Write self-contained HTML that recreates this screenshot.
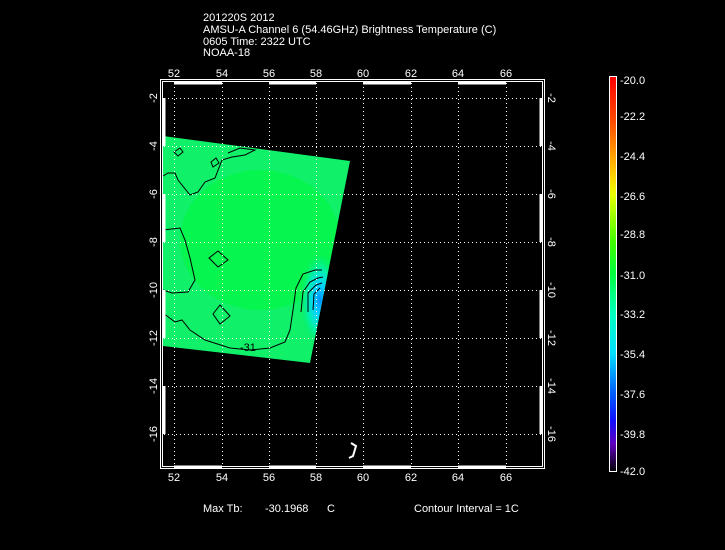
<!DOCTYPE html>
<html><head><meta charset="utf-8"><style>
html,body{margin:0;padding:0;background:#000;width:725px;height:550px;overflow:hidden}
svg{display:block}
text{font-family:"Liberation Sans",sans-serif;fill:#fff;font-size:11px}
</style></head><body>
<svg width="725" height="550" viewBox="0 0 725 550" xmlns="http://www.w3.org/2000/svg">
<defs>
<linearGradient id="cb" x1="0" y1="0" x2="0" y2="1">
<stop offset="0" stop-color="#ff0000"/>
<stop offset="0.12" stop-color="#ff5000"/>
<stop offset="0.25" stop-color="#ffd000"/>
<stop offset="0.3" stop-color="#e8ff00"/>
<stop offset="0.42" stop-color="#40ff00"/>
<stop offset="0.5" stop-color="#00ff40"/>
<stop offset="0.6" stop-color="#00ffc0"/>
<stop offset="0.7" stop-color="#00e0ff"/>
<stop offset="0.8" stop-color="#0060ff"/>
<stop offset="0.87" stop-color="#1010ff"/>
<stop offset="0.93" stop-color="#6000c0"/>
<stop offset="1" stop-color="#000000"/>
</linearGradient>
<radialGradient id="blue" cx="320" cy="300" r="36" gradientUnits="userSpaceOnUse" gradientTransform="translate(320 300) scale(0.55 1.3) translate(-320 -300)">
<stop offset="0" stop-color="#0090ff"/>
<stop offset="0.3" stop-color="#00d0ff"/>
<stop offset="0.65" stop-color="#00f0b0"/>
<stop offset="1" stop-color="#00f070" stop-opacity="0"/>
</radialGradient>
<clipPath id="sw"><polygon points="163,136 350,161 310,363 163,346"/></clipPath>
</defs>
<text x="203" y="21">201220S 2012</text>
<text x="203" y="33">AMSU-A Channel 6 (54.46GHz) Brightness Temperature (C)</text>
<text x="203" y="45">0605 Time: 2322 UTC</text>
<text x="203" y="56">NOAA-18</text>

<polygon points="163,136 350,161 310,363 163,346" fill="#10f068"/>
<g clip-path="url(#sw)">
<ellipse cx="260" cy="240" rx="80" ry="70" fill="#00f840" opacity="0.6"/>
<rect x="260" y="230" width="100" height="140" fill="url(#blue)"/>
</g>
<g fill="none" stroke="#000" stroke-width="1">
<path d="M163,176 L168,173 L175,173 L178,180 L190,195 L198,192 L205,182 L215,178 L222,160 L232,157 L245,155 L255,150 L240,148 L228,153"/>
<path d="M163,230 L180,228 L185,240 L190,258 L195,280 L188,292 L172,293 L163,290"/>
<path d="M163,313 L175,322 L182,320 L190,330 L205,340 L230,348 L250,350 L270,348 L285,342 L290,330 L293,310 L296,288 L303,274 L315,270 L322,270"/>
<path d="M301,312 L303,292 L310,282 L318,278 L323,277"/>
<path d="M308,312 L308,293 L316,285 L322,283"/>
<path d="M313,310 L314,294 L320,288"/>
<path d="M209,258 L218,251 L228,260 L218,267 Z"/>
<path d="M213,314 L220,305 L230,316 L220,324 Z"/>
<path d="M211,162 L216,158 L219,163 L213,167 Z"/>
<path d="M174,152 L180,148 L183,152 L178,156 Z"/>
</g>
<text x="240" y="351" font-size="10" style="fill:#000">-31</text>

<g stroke="#fff" stroke-width="1" stroke-dasharray="1,3">
<line x1="174.5" y1="83" x2="174.5" y2="466"/><line x1="222.5" y1="83" x2="222.5" y2="466"/>
<line x1="269.5" y1="83" x2="269.5" y2="466"/><line x1="316.5" y1="83" x2="316.5" y2="466"/>
<line x1="363.5" y1="83" x2="363.5" y2="466"/><line x1="411.5" y1="83" x2="411.5" y2="466"/>
<line x1="458.5" y1="83" x2="458.5" y2="466"/><line x1="506.5" y1="83" x2="506.5" y2="466"/>
<line x1="164" y1="98.5" x2="542" y2="98.5"/><line x1="164" y1="146.5" x2="542" y2="146.5"/>
<line x1="164" y1="194.5" x2="542" y2="194.5"/><line x1="164" y1="242.5" x2="542" y2="242.5"/>
<line x1="164" y1="290.5" x2="542" y2="290.5"/><line x1="164" y1="338.5" x2="542" y2="338.5"/>
<line x1="164" y1="386.5" x2="542" y2="386.5"/><line x1="164" y1="434.5" x2="542" y2="434.5"/>
</g>
<path d="M351,443 L356,446 L353,456 L349,458" stroke="#fff" stroke-width="2" fill="none"/>

<rect x="160.5" y="79.5" width="384" height="389" fill="none" stroke="#fff"/>
<rect x="162.5" y="81.5" width="380" height="385" fill="none" stroke="#fff"/>
<g stroke="#fff" stroke-width="3">
<line x1="174" y1="83" x2="222" y2="83"/><line x1="269" y1="83" x2="316" y2="83"/><line x1="363" y1="83" x2="411" y2="83"/><line x1="458" y1="83" x2="506" y2="83"/>
<line x1="174" y1="467" x2="222" y2="467"/><line x1="269" y1="467" x2="316" y2="467"/><line x1="363" y1="467" x2="411" y2="467"/><line x1="458" y1="467" x2="506" y2="467"/>
<line x1="164" y1="98" x2="164" y2="146"/><line x1="164" y1="194" x2="164" y2="242"/><line x1="164" y1="290" x2="164" y2="338"/><line x1="164" y1="386" x2="164" y2="434"/>
<line x1="541" y1="98" x2="541" y2="146"/><line x1="541" y1="194" x2="541" y2="242"/><line x1="541" y1="290" x2="541" y2="338"/><line x1="541" y1="386" x2="541" y2="434"/>
</g>

<g text-anchor="middle">
<text x="174" y="77">52</text><text x="222" y="77">54</text><text x="269" y="77">56</text><text x="316" y="77">58</text>
<text x="363" y="77">60</text><text x="411" y="77">62</text><text x="458" y="77">64</text><text x="506" y="77">66</text>
<text x="174" y="481">52</text><text x="222" y="481">54</text><text x="269" y="481">56</text><text x="316" y="481">58</text>
<text x="363" y="481">60</text><text x="411" y="481">62</text><text x="458" y="481">64</text><text x="506" y="481">66</text>
</g>
<g text-anchor="middle">
<text transform="translate(157,98) rotate(-90)">-2</text>
<text transform="translate(157,146) rotate(-90)">-4</text>
<text transform="translate(157,194) rotate(-90)">-6</text>
<text transform="translate(157,242) rotate(-90)">-8</text>
<text transform="translate(157,290) rotate(-90)">-10</text>
<text transform="translate(157,338) rotate(-90)">-12</text>
<text transform="translate(157,386) rotate(-90)">-14</text>
<text transform="translate(157,434) rotate(-90)">-16</text>
<text transform="translate(548,98) rotate(90)">-2</text>
<text transform="translate(548,146) rotate(90)">-4</text>
<text transform="translate(548,194) rotate(90)">-6</text>
<text transform="translate(548,242) rotate(90)">-8</text>
<text transform="translate(548,290) rotate(90)">-10</text>
<text transform="translate(548,338) rotate(90)">-12</text>
<text transform="translate(548,386) rotate(90)">-14</text>
<text transform="translate(548,434) rotate(90)">-16</text>
</g>

<rect x="609.5" y="76.5" width="7" height="395" fill="url(#cb)" stroke="#fff"/>
<g>
<text x="620" y="84">-20.0</text><text x="620" y="120">-22.2</text><text x="620" y="160">-24.4</text>
<text x="620" y="200">-26.6</text><text x="620" y="238">-28.8</text><text x="620" y="279">-31.0</text>
<text x="620" y="318">-33.2</text><text x="620" y="358">-35.4</text><text x="620" y="398">-37.6</text>
<text x="620" y="438">-39.8</text><text x="620" y="475">-42.0</text>
</g>

<text x="203" y="512">Max Tb:</text>
<text x="265" y="512">-30.1968</text>
<text x="327" y="512">C</text>
<text x="414" y="512">Contour Interval = 1C</text>
</svg>
</body></html>
